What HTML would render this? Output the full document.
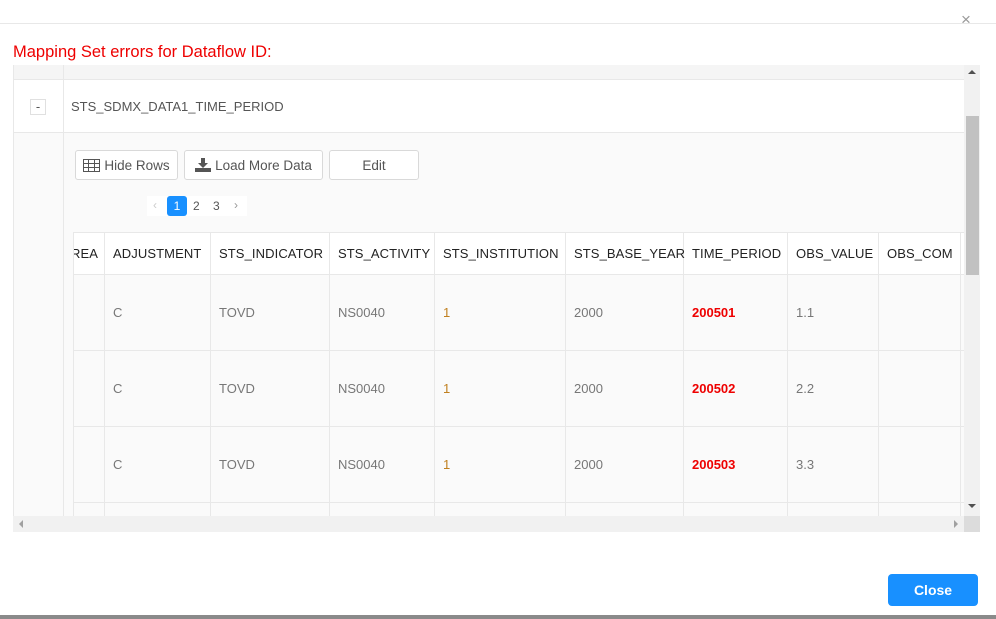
<!DOCTYPE html>
<html><head><meta charset="utf-8"><style>
*{box-sizing:border-box;margin:0;padding:0}
body{width:996px;height:619px;background:#fff;position:relative;overflow:hidden;font-family:"Liberation Sans",sans-serif;color:#666}
.a{position:absolute}
.btn{position:absolute;top:150px;height:30px;border:1px solid #d9d9d9;border-radius:3px;background:#fff;font-size:13.5px;color:#555;display:flex;align-items:center;justify-content:center;gap:4px}
.th{position:absolute;top:246px;font-size:13px;color:#222;white-space:nowrap;letter-spacing:0.1px}
.td{position:absolute;font-size:13px;color:#777}
.vl{position:absolute;top:232px;height:284px;width:1px;background:#e8e8e8}
.hl{position:absolute;left:73px;width:891px;height:1px;background:#e8e8e8}
</style></head><body>
<div class="a" style="left:0;top:23px;width:996px;height:1px;background:#e8e8e8"></div>
<div class="a" style="left:961px;top:10px;font-size:17px;color:#999">×</div>
<div class="a" style="left:13px;top:43px;font-size:16.5px;color:#e00">Mapping Set errors for Dataflow ID:</div>

<div class="a" style="left:13px;top:65px;width:967px;height:467px;background:#fafafa;overflow:hidden">
  <div class="a" style="left:0;top:0;width:951px;height:15px;background:#f5f5f5;border-bottom:1px solid #e8e8e8"></div>
  <div class="a" style="left:0;top:15px;width:951px;height:53px;background:#fff;border-bottom:1px solid #e8e8e8"></div>
  <div class="a" style="left:0;top:0;width:1px;height:451px;background:#e8e8e8"></div>
  <div class="a" style="left:50px;top:0;width:1px;height:451px;background:#e8e8e8"></div>
  <div class="a" style="left:17px;top:34px;width:16px;height:16px;border:1px solid #e0e0e0;font-size:13px;text-align:center;line-height:14px;color:#555;background:#fff">-</div>
  <div class="a" style="left:58px;top:34px;font-size:13px;color:#555">STS_SDMX_DATA1_TIME_PERIOD</div>
  <div class="a" style="left:951px;top:0;width:16px;height:451px;background:#f1f1f1"></div>
  <div class="a" style="left:953px;top:51px;width:13px;height:159px;background:#c1c1c1"></div>
  <div class="a" style="left:955px;top:5px;border:4px solid transparent;border-bottom:4px solid #505050;border-top:0"></div>
  <div class="a" style="left:955px;top:439px;border:4px solid transparent;border-top:4px solid #505050;border-bottom:0"></div>
  <div class="a" style="left:0;top:451px;width:951px;height:16px;background:#f1f1f1"></div>
  <div class="a" style="left:951px;top:451px;width:16px;height:16px;background:#dcdcdc"></div>
  <div class="a" style="left:6px;top:455px;border:4px solid transparent;border-right:4px solid #a0a0a0;border-left:0"></div>
  <div class="a" style="left:941px;top:455px;border:4px solid transparent;border-left:4px solid #a0a0a0;border-right:0"></div>
</div>

<div class="btn" style="left:75px;width:103px"><svg width="17" height="13" viewBox="0 0 17 13"><rect x="0.5" y="0.5" width="16" height="12" fill="none" stroke="#555"/><path d="M0 4.5H17M0 8.5H17M5.5 0V13M11.5 0V13" stroke="#555"/></svg>Hide Rows</div>
<div class="btn" style="left:184px;width:139px"><svg width="16" height="14" viewBox="0 0 16 14"><path d="M6 0h4v5h3l-5 5-5-5h3z" fill="#555"/><rect x="0" y="10" width="16" height="4" fill="#555"/></svg>Load More Data</div>
<div class="btn" style="left:329px;width:90px">Edit</div>

<div class="a" style="left:147px;top:196px;width:100px;height:20px;background:#fff"></div>
<div class="a" style="left:153px;top:198px;font-size:12px;color:#ccc">‹</div>
<div class="a" style="left:167px;top:196px;width:20px;height:20px;background:#1890ff;border-radius:3px;color:#fff;font-size:12px;text-align:center;line-height:20px">1</div>
<div class="a" style="left:193px;top:199px;font-size:12px;color:#555">2</div>
<div class="a" style="left:213px;top:199px;font-size:12px;color:#555">3</div>
<div class="a" style="left:234px;top:198px;font-size:12px;color:#999">›</div>

<div class="a" style="left:73px;top:232px;width:891px;height:42px;background:#fff;border-top:1px solid #e8e8e8"></div>
<div class="vl" style="left:73px"></div><div class="vl" style="left:104px"></div><div class="vl" style="left:210px"></div><div class="vl" style="left:329px"></div><div class="vl" style="left:434px"></div><div class="vl" style="left:565px"></div><div class="vl" style="left:683px"></div><div class="vl" style="left:787px"></div><div class="vl" style="left:878px"></div><div class="vl" style="left:960px"></div>
<div class="hl" style="top:274px"></div><div class="hl" style="top:350px"></div><div class="hl" style="top:426px"></div><div class="hl" style="top:502px"></div>

<div class="th" style="left:74px;width:30px;overflow:hidden"><span style="margin-left:-3px">REA</span></div>
<div class="th" style="left:113px">ADJUSTMENT</div>
<div class="th" style="left:219px">STS_INDICATOR</div>
<div class="th" style="left:338px">STS_ACTIVITY</div>
<div class="th" style="left:443px">STS_INSTITUTION</div>
<div class="th" style="left:574px">STS_BASE_YEAR</div>
<div class="th" style="left:692px">TIME_PERIOD</div>
<div class="th" style="left:796px">OBS_VALUE</div>
<div class="th" style="left:887px">OBS_COM</div>

<div class="td" style="left:113px;top:305px">C</div><div class="td" style="left:219px;top:305px">TOVD</div><div class="td" style="left:338px;top:305px">NS0040</div><div class="td" style="left:443px;top:305px;color:#c08020">1</div><div class="td" style="left:574px;top:305px">2000</div><div class="td" style="left:692px;top:305px;color:#e00;font-weight:bold">200501</div><div class="td" style="left:796px;top:305px">1.1</div>
<div class="td" style="left:113px;top:381px">C</div><div class="td" style="left:219px;top:381px">TOVD</div><div class="td" style="left:338px;top:381px">NS0040</div><div class="td" style="left:443px;top:381px;color:#c08020">1</div><div class="td" style="left:574px;top:381px">2000</div><div class="td" style="left:692px;top:381px;color:#e00;font-weight:bold">200502</div><div class="td" style="left:796px;top:381px">2.2</div>
<div class="td" style="left:113px;top:457px">C</div><div class="td" style="left:219px;top:457px">TOVD</div><div class="td" style="left:338px;top:457px">NS0040</div><div class="td" style="left:443px;top:457px;color:#c08020">1</div><div class="td" style="left:574px;top:457px">2000</div><div class="td" style="left:692px;top:457px;color:#e00;font-weight:bold">200503</div><div class="td" style="left:796px;top:457px">3.3</div>

<div class="a" style="left:888px;top:574px;width:90px;height:32px;background:#1890ff;border-radius:4px;color:#fff;font-size:14px;font-weight:bold;text-align:center;line-height:32px">Close</div>
<div class="a" style="left:0;top:615px;width:996px;height:4px;background:#8a8a8a"></div>
</body></html>
